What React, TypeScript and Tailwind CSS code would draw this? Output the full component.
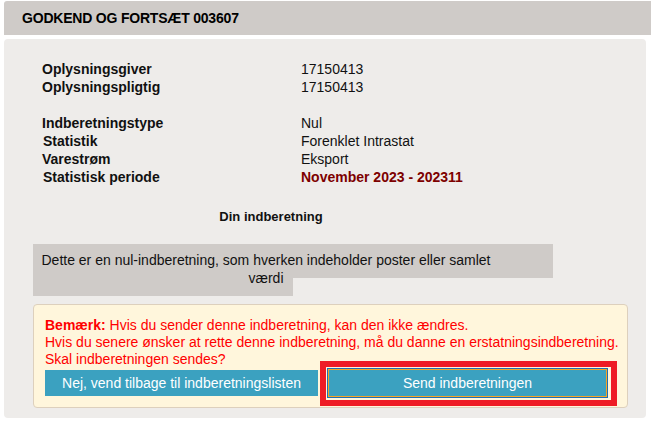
import React from "react";

const rows1 = [
  { label: "Oplysningsgiver", value: "17150413" },
  { label: "Oplysningspligtig", value: "17150413" },
];

const rows2 = [
  { label: "Indberetningstype", value: "Nul" },
  { label: "Statistik", value: "Forenklet Intrastat", nudge: true },
  { label: "Varestrøm", value: "Eksport" },
];

export default function App() {
  return (
    <div className="w-[651px] h-[424px] bg-white font-['Liberation_Sans',Arial,sans-serif] text-[#111] overflow-hidden">
      {/* TOPBAR */}
      <div className="ml-[4px] mt-[1px] h-[34px] bg-[#cfcbc8] rounded-tl-[3px] flex items-center pl-[18px]">
        <h1 className="text-[14px] font-bold tracking-[-0.2px] text-black">GODKEND OG FORTSÆT 003607</h1>
      </div>

      {/* PANEL */}
      <div className="ml-[4px] mt-[4px] w-[642px] h-[379px] bg-[#eeecea] rounded-[4px] pt-[21px]">
        <div className="pl-[38px] text-[14px] leading-[18px]">
          {rows1.map((r) => (
            <div key={r.label} className="flex">
              <div className="w-[259px] font-bold">{r.label}</div>
              <div>{r.value}</div>
            </div>
          ))}
          <div className="h-[18px]" />
          {rows2.map((r) => (
            <div key={r.label} className="flex">
              <div className={r.nudge ? "w-[259px] font-bold pl-[1px]" : "w-[259px] font-bold"}>{r.label}</div>
              <div>{r.value}</div>
            </div>
          ))}
          <div className="flex">
            <div className="w-[259px] font-bold pl-[1px]">Statistisk periode</div>
            <div className="font-bold text-[#7d0000]">November 2023 - 202311</div>
          </div>
        </div>

        <div className="ml-[29px] w-[476px] mt-[22px] text-center text-[13px] leading-[18px] font-bold">
          Din indberetning
        </div>

        {/* nul-indberetning */}
        <div className="ml-[29px] mt-[18px]">
          <div className="w-[520px] h-[34px] bg-[#cfcbc8] pt-[7px]">
            <p className="w-[466px] text-center text-[14px] leading-[18px]">
              Dette er en nul-indberetning, som hverken indeholder poster eller samlet værdi
            </p>
          </div>
          <div className="w-[260px] h-[18px] bg-[#cfcbc8]" />
        </div>

        {/* ADVARSEL */}
        <div className="relative ml-[29px] mt-[8px] w-[595px] h-[104px] bg-[#fff6dc] border border-[#ddd0bd] rounded-[4px] pl-[11px] pt-[12px]">
          <div className="text-[14px] leading-[17px] text-[#ff0000]">
            <p>
              <span className="font-bold">Bemærk:</span> Hvis du sender denne indberetning, kan den ikke ændres.
            </p>
            <p>Hvis du senere ønsker at rette denne indberetning, må du danne en erstatningsindberetning.</p>
            <p>Skal indberetningen sendes?</p>
          </div>
          <div className="flex items-center gap-[10px] mt-[1px]">
            <button className="w-[273px] h-[26px] bg-[#3ba1c0] text-white text-[14px]">
              Nej, vend tilbage til indberetningslisten
            </button>
            <button className="w-[279px] h-[28px] bg-[#3ba1c0] text-white text-[14px] border border-[#f5a623] outline outline-1 outline-[#1e6fb5]">
              Send indberetningen
            </button>
          </div>
          <div className="absolute left-[286px] top-[56px] w-[297px] h-[45px] border-[6px] border-[#ee1c25] pointer-events-none" />
        </div>
      </div>
    </div>
  );
}
